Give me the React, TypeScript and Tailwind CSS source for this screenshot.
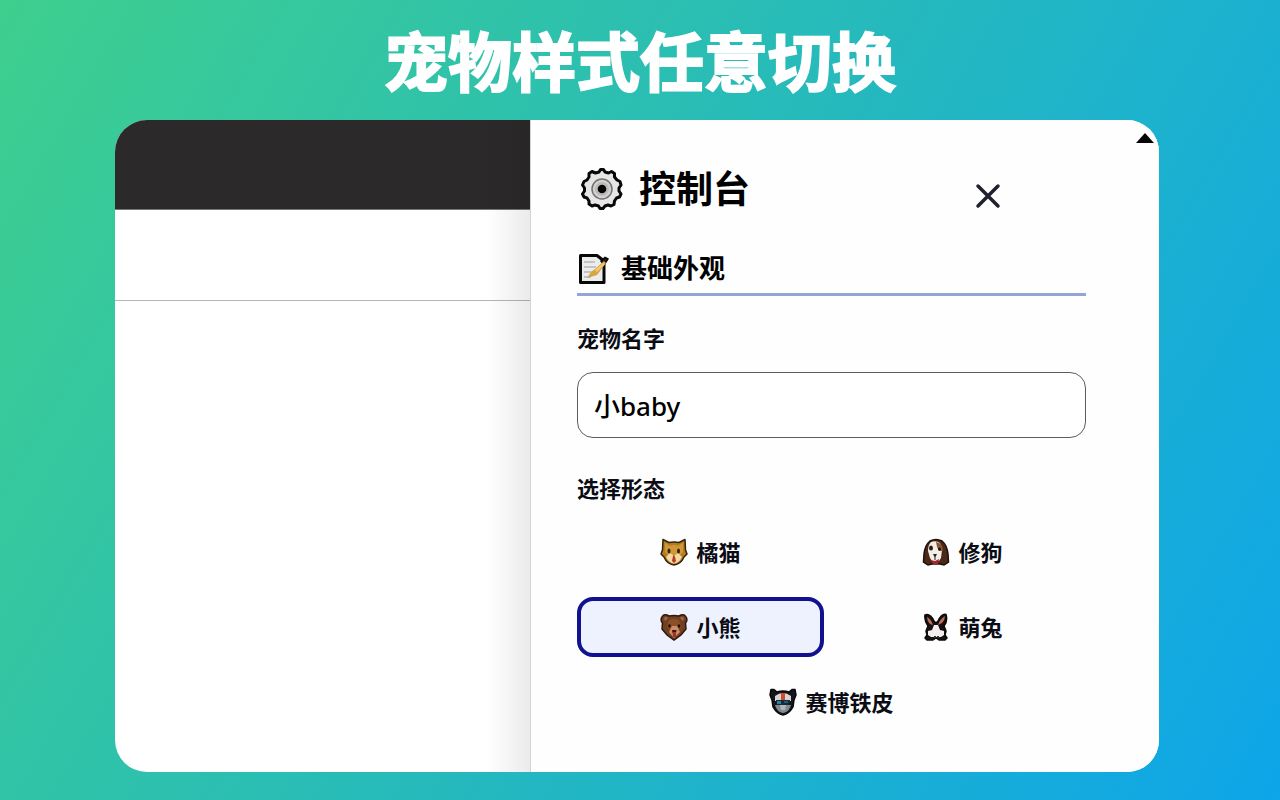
import { useState } from 'react';
import type { ReactNode } from 'react';

function GearIcon() {
  return (
    <svg viewBox="0 0 42 42" className="h-[42px] w-[42px] shrink-0" aria-hidden="true">
      <path
        d="M14.500 5 L18 4 L19.500 1.500 H22.500 L24 4 L27.500 5 L30.500 3.500 L33.500 5.500 L33.500 9 L36 12 L39 13.500 L40 17 L38 20 V23 L40 26 L38.500 29 L35.500 30 L33.500 33 L33 36.500 L30 38 L27 37 L24 38 L22 40.500 H19 L17.500 38 L14 37 L11 38 L8 36 V33 L6 30 L3 29 L1.500 26 L3.500 23 V20 L1.500 17 L3 13.500 L6 12 L8 9 V5.500 L11 3.500 Z"
        fill="#e6e6e6"
        stroke="#080808"
        strokeWidth="3"
        strokeLinejoin="round"
      />
      <circle cx="21" cy="21" r="10" fill="#d2d2d2" stroke="#77706f" strokeWidth="1.500" />
      <circle cx="21" cy="21" r="7" fill="#bcbab9" />
      <circle cx="21" cy="21" r="4.300" fill="#050505" />
    </svg>
  );
}

function MemoIcon() {
  return (
    <svg viewBox="0 0 32 32" className="h-8 w-8 shrink-0" aria-hidden="true">
      <path d="M3.500 2.500 H20 L27 8 V29.500 H3.500 Z" fill="#ececec" stroke="#080808" strokeWidth="3" strokeLinejoin="round" />
      <path d="M7 9 H18 M7 14 H19 M7 19 H16 M7 24 H14" stroke="#b5b5b5" strokeWidth="1.500" />
      <path d="M31 6 L28 4.500 L24 8 L27 12 Z" fill="#241c12" stroke="#080808" strokeWidth="1.500" />
      <path d="M27 8 L18 16 L14 19 L10 25 L20 22 L29 10 Z" fill="#d9a443" />
      <path d="M26 10 L18 17 L20 19 L28 11 Z" fill="#f0c878" />
    </svg>
  );
}

function CatIcon() {
  return (
    <>
      <path d="M3 1.500 L9 4.500 Q14 3.500 19 4.500 L25 1.500 L25.500 12 L27 16 L24 19 Q21 26 14 27 Q7 26 4 19 L1 16 L2.500 12 Z" fill="#b97a20" stroke="#2e230b" strokeWidth="1.500" strokeLinejoin="round" />
      <path d="M5 5 L10 8 Q14 6 18 8 L23 5 V14 L19 18 H9 L5 14 Z" fill="#d09836" />
      <path d="M10 15 L14 18 L18 15 L22 19 Q19 25 14 25.500 Q9 25 6 19 Z" fill="#f3d9a4" />
      <ellipse cx="9" cy="13" rx="1.500" ry="2.500" fill="#352308" />
      <ellipse cx="18.500" cy="13" rx="1.500" ry="2.500" fill="#352308" />
      <path d="M13 18 L14 17 L15 19 L16 23 L14 25 L12 23 Z" fill="#b43c25" />
    </>
  );
}

function DogIcon() {
  return (
    <>
      <path d="M8 3 Q14 0 20 3 Q25 7 26 16 L26.500 24 L22 27 L18 26 H10 L6 27 L1.500 24 L2 16 Q3 7 8 3 Z" fill="#4b2918" stroke="#1d100b" strokeWidth="1.500" />
      <path d="M9 4 Q14 2 18 5 L20 12 L19 20 L17 23 H10 L8 20 L6 13 Q6 7 9 4 Z" fill="#f4eee9" />
      <path d="M14 4 Q21 5 21 13 L17 13 L15 9 Z" fill="#8f5730" />
      <ellipse cx="9" cy="10" rx="2" ry="2.500" fill="#2a1d18" />
      <circle cx="17.500" cy="11" r="1.500" fill="#15100d" />
      <path d="M11 16 H15 L13.500 19 V22 H12.500 V19 Z" fill="#28201d" />
      <path d="M9 22 L13 23 L17 21 L16 26 H11 Z" fill="#a6262f" />
    </>
  );
}

function BearIcon() {
  return (
    <>
      <path d="M2 4 Q4 0 9 3 Q14 2 19 3 Q24 0 26 4 Q28 7 25.500 10 L26 16 L21 22 L14 27 L7 22 L2 16 L2.500 10 Q0 7 2 4 Z" fill="#70401f" stroke="#2d180d" strokeWidth="1.500" />
      <path d="M4 5 Q6 3 8 5 L5 8 Z M24 5 Q22 3 20 5 L23 8 Z" fill="#a26942" />
      <path d="M9 7 Q14 5 19 7 L21 14 L18 17 H10 L7 14 Z" fill="#8a5028" />
      <path d="M12 13 H17 L20 19 L14 25 L9 19 Z" fill="#cf8b68" />
      <ellipse cx="9.500" cy="13" rx="1.300" ry="1.800" fill="#1c0f09" />
      <ellipse cx="19" cy="13" rx="1.300" ry="1.800" fill="#1c0f09" />
      <path d="M12 17 H16.500 L16 20 H12.500 Z" fill="#37160f" />
      <path d="M12.500 19 H16 V24 H13 Z" fill="#9a3527" />
    </>
  );
}

function RabbitIcon() {
  return (
    <>
      <path d="M3 2 Q8 0 12 8 L14 10 L16 8 Q20 0 24 1.500 Q26 8 22 13 L24 18 L23 22 L25 25 L23 27 H17 L14 25 L11 27 H5 L3 25 L5 22 L4 18 L6 13 Q2 7 3 2 Z" fill="#171211" stroke="#0c0908" strokeWidth="1.500" strokeLinejoin="round" />
      <path d="M5 4 Q9 6 11 12 L8 11 Q5 8 5 4 Z M23 3 Q18 6 16 12 L20 10 Q23 7 23 3 Z" fill="#c06c5d" />
      <path d="M12 12 H16 L18 17 L22 18 V22 L19 24 H9 L6 22 V18 L10 17 Z" fill="#f4eeee" />
      <path d="M12 23 H14 V25 H12 Z M15 23 H17 V25 H15 Z" fill="#3b3030" />
    </>
  );
}

function RobotIcon() {
  return (
    <>
      <path d="M2 1.500 H5 L8 4 Q14 2 20 4 L23 1.500 H26 L27 7 L25 12 L24 19 Q20 26 14 27 Q8 26 4 19 L3 12 L1 7 Z" fill="#15171a" stroke="#090a0b" strokeWidth="1.500" strokeLinejoin="round" />
      <path d="M6 8 Q14 2 22 8 L22 13 H6 Z" fill="#d8d5d3" />
      <path d="M12 5 H16 V12 H12 Z" fill="#d14a30" />
      <path d="M7 12 H21 L20 17 H8 Z" fill="#152b3a" />
      <path d="M8 13 H12 V16 H8 Z" fill="#25859e" />
      <path d="M15 13 H19 V15 H15 Z" fill="#205c78" />
      <path d="M6 17 H22 Q20 24 14 25 Q8 24 6 17 Z" fill="#85898c" />
      <path d="M11 17 H17 L16 22 H12 Z" fill="#b4b6b7" />
    </>
  );
}

interface Pet {
  id: string;
  name: string;
  icon: ReactNode;
}

const pets: Pet[] = [
  { id: 'cat', name: '橘猫', icon: <CatIcon /> },
  { id: 'dog', name: '修狗', icon: <DogIcon /> },
  { id: 'bear', name: '小熊', icon: <BearIcon /> },
  { id: 'rabbit', name: '萌兔', icon: <RabbitIcon /> },
  { id: 'robot', name: '赛博铁皮', icon: <RobotIcon /> },
];

export default function App() {
  const [name, setName] = useState('小baby');
  const [selected, setSelected] = useState('bear');

  return (
    <main className="flex min-h-screen flex-col bg-linear-[120deg] from-[#3ecf8e] to-[#0ea5e9] font-['Noto_Sans','Noto_Sans_CJK_SC',sans-serif]">
      <h1 className="flex h-[120px] items-center justify-center pb-1 text-center font-['Noto_Sans_CJK_SC',sans-serif] text-[64px] font-bold text-white [-webkit-text-stroke:2px_white]">
        宠物样式任意切换
      </h1>

      <div className="mr-[121px] mb-7 ml-[115px] flex flex-1 overflow-hidden rounded-[32px] bg-white">
        {/* Page behind the panel */}
        <div className="relative flex flex-1 flex-col">
          <div className="h-[90px] border-b border-[#777] bg-[#2b2929]" />
          <div className="h-[91px] border-b border-[#b5b5b5]" />
          <div className="pointer-events-none absolute inset-y-0 right-0 w-11 bg-linear-to-r from-transparent to-black/8" />
        </div>

        {/* Control panel */}
        <aside className="relative w-[629px] border-l border-[#d4d4d4] bg-[#fefefe] pt-10 pr-[73px] pl-[46px] text-[#0b0c14]">
          <svg viewBox="0 0 18 10" className="absolute top-[13px] right-[5px] h-[10px] w-[18px]" aria-hidden="true">
            <path d="M9 0 L18 10 H0 Z" fill="#050505" />
          </svg>

          <header className="flex h-[58px] items-center">
            <h2 className="flex flex-1 items-center gap-4 pl-1 text-[37px] font-bold text-black">
              <GearIcon />
              控制台
            </h2>
            <button type="button" aria-label="关闭" className="mt-3.5 mr-20 p-1">
              <svg viewBox="0 0 28 28" className="h-7 w-7" aria-hidden="true">
                <path d="M4 4 L24 24 M24 4 L4 24" stroke="#20202e" strokeWidth="3.500" strokeLinecap="round" />
              </svg>
            </button>
          </header>

          <h3 className="mt-[26px] flex h-[52px] items-center gap-3 border-b-3 border-[#94a3d8] text-[26px] font-bold text-black">
            <MemoIcon />
            基础外观
          </h3>

          <label htmlFor="pet-name" className="mt-[26px] block text-[22px] leading-8 font-bold">
            宠物名字
          </label>
          <input
            id="pet-name"
            value={name}
            onChange={(e) => setName(e.target.value)}
            className="mt-[18px] block h-[66px] w-full rounded-2xl border border-[#5c5c60] bg-white px-4 text-[26px] font-medium text-black outline-none"
          />

          <h4 className="mt-[34px] text-[22px] leading-8 font-bold">选择形态</h4>
          <div className="mt-[18px] grid grid-cols-2 gap-[15px]">
            {pets.map((pet) => (
              <button
                key={pet.id}
                type="button"
                aria-pressed={selected === pet.id}
                onClick={() => setSelected(pet.id)}
                className={`flex h-[60px] items-center justify-center gap-2 rounded-2xl border-4 text-[22px] font-bold last:col-span-2 ${
                  selected === pet.id ? 'border-[#11128f] bg-[#eef2ff]' : 'border-transparent'
                }`}
              >
                <svg viewBox="0 0 28 28" className="h-7 w-7" aria-hidden="true">
                  {pet.icon}
                </svg>
                {pet.name}
              </button>
            ))}
          </div>
        </aside>
      </div>
    </main>
  );
}
